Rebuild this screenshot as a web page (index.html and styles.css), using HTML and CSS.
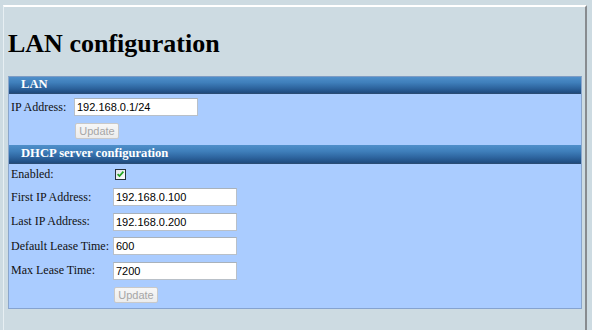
FILE: index.html
```html
<!DOCTYPE html>
<html>
<head>
<meta charset="utf-8">
<link rel="stylesheet" href="styles.css">
</head>
<body>
<div class="frame">
  <h1 class="title">LAN configuration</h1>
  <div class="panel">
    <div class="bar bar-lan">LAN</div>
    <div class="section section-lan">
      <div class="row">
        <label class="label">IP Address:</label>
        <input class="field" type="text" value="192.168.0.1/24">
      </div>
      <div class="row row-btn">
        <span class="label"></span>
        <button class="btn" disabled>Update</button>
      </div>
    </div>
    <div class="bar bar-dhcp">DHCP server configuration</div>
    <div class="section section-dhcp">
      <div class="row row-check">
        <label class="label">Enabled:</label>
        <span class="check"><svg width="9" height="8" viewBox="0 0 9 8"><path d="M1.6 4.1 L3.5 6.0 L7.4 1.6" fill="none" stroke="#22a322" stroke-width="1.7"/></svg></span>
      </div>
      <div class="row">
        <label class="label">First IP Address:</label>
        <input class="field" type="text" value="192.168.0.100">
      </div>
      <div class="row">
        <label class="label">Last IP Address:</label>
        <input class="field" type="text" value="192.168.0.200">
      </div>
      <div class="row">
        <label class="label">Default Lease Time:</label>
        <input class="field" type="text" value="600">
      </div>
      <div class="row">
        <label class="label">Max Lease Time:</label>
        <input class="field" type="text" value="7200">
      </div>
      <div class="row row-btn">
        <span class="label"></span>
        <button class="btn" disabled>Update</button>
      </div>
    </div>
  </div>
</div>
</body>
</html>
```
FILE: styles.css
```css
html, body {
  margin: 0;
  padding: 0;
  background: #cddbe2;
}
body {
  height: 330px;
  overflow: hidden;
  font-family: "Liberation Serif", "Times New Roman", serif;
}
.frame {
  margin: 5px 5px 0 3px;
  height: 330px;
  border-top: 2px solid #ffffff;
  border-left: 1px solid #e7eff3;
  border-right: 2px solid #878b8f;
  padding: 0 3px 0 4px;
}
.title {
  margin: 0 0 17.5px 0;
  padding-top: 21.5px;
  font-size: 26px;
  font-weight: bold;
  line-height: 30px;
  color: #000;
}
.panel {
  background: #aaccff;
  border: 1px solid #8aa6cc;
  border-top-color: #7d9cc4;
  border-bottom-color: #86a3cf;
  padding-bottom: 5px;
}
.bar {
  box-sizing: border-box;
  height: 17px;
  padding-left: 12px;
  color: #fff;
  font-weight: bold;
  font-size: 12.6px;
  background: linear-gradient(#4f8fca 0%, #3f7fbb 35%, #2d649e 70%, #1f4a7d 100%);
  border-bottom: 1px solid #2a4c74;
}
.bar-lan { line-height: 14px; }
.bar-dhcp { height: 19px; margin-top: 6px; line-height: 16px; }
.section-lan { padding-top: 4px; }
.section-dhcp { padding-top: 5px; }
.row {
  display: flex;
  align-items: center;
  padding-left: 2px;
  font-size: 12px;
  color: #111;
}
.label {
  flex: none;
}
.section-lan .label { width: 63px; }
.section-dhcp .label { width: 102px; }
.section-dhcp .row + .row { margin-top: 6.5px; }
.section-dhcp .row-check + .row { margin-top: 8px; }
.section-dhcp .row-btn, .section-dhcp .row + .row-btn { margin-top: 7px; }
.section-lan .row-btn { margin-top: 7px; }
.field {
  box-sizing: border-box;
  width: 124px;
  height: 18px;
  margin: 0;
  padding: 0 2px;
  border: 1px solid #b9c0c8;
  border-top-color: #a9b2bb;
  background: #fff;
  font-family: "Liberation Sans", Arial, sans-serif;
  font-size: 11px;
  color: #000;
  outline: none;
}
.btn {
  box-sizing: border-box;
  width: 44px;
  height: 16px;
  margin: 0 0 0 1px;
  padding: 0;
  border: 1px solid #c9c9c9;
  border-radius: 2px;
  background: linear-gradient(#f7f7f7, #ececec);
  color: #a6a6a6;
  font-family: "Liberation Sans", Arial, sans-serif;
  font-size: 11px;
  line-height: 14px;
}
.row-check { height: 11px; }
.check {
  display: inline-block;
  box-sizing: border-box;
  width: 11px;
  height: 11px;
  margin-left: 2px;
  border: 1px solid #27313d;
  background: linear-gradient(135deg, #dfe3e8, #fbfcfd);
  line-height: 0;
}
.check svg { display: block; }
```
